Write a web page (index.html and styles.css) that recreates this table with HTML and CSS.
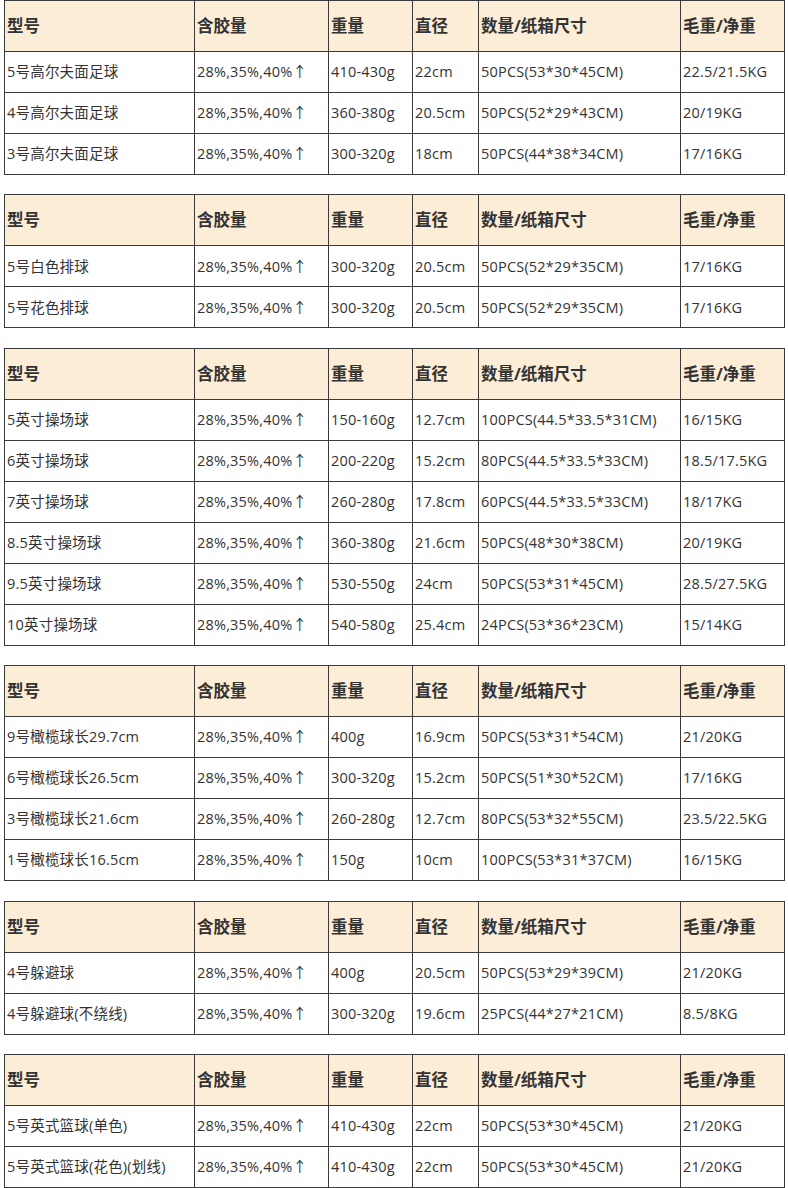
FILE: index.html
```html
<!DOCTYPE html>
<html lang="zh-CN">
<head>
<meta charset="utf-8">
<title>规格表</title>
<link rel="stylesheet" href="styles.css">
</head>
<body>
<div class="page">

<table class="spec">
<colgroup><col class="c1"><col class="c2"><col class="c3"><col class="c4"><col class="c5"><col class="c6"></colgroup>
<tr class="head"><th>型号</th><th>含胶量</th><th>重量</th><th>直径</th><th>数量/纸箱尺寸</th><th>毛重/净重</th></tr>
<tr><td>5号高尔夫面足球</td><td>28%,35%,40%↑</td><td>410-430g</td><td>22cm</td><td>50PCS(53*30*45CM)</td><td>22.5/21.5KG</td></tr>
<tr><td>4号高尔夫面足球</td><td>28%,35%,40%↑</td><td>360-380g</td><td>20.5cm</td><td>50PCS(52*29*43CM)</td><td>20/19KG</td></tr>
<tr><td>3号高尔夫面足球</td><td>28%,35%,40%↑</td><td>300-320g</td><td>18cm</td><td>50PCS(44*38*34CM)</td><td>17/16KG</td></tr>
</table>

<table class="spec">
<colgroup><col class="c1"><col class="c2"><col class="c3"><col class="c4"><col class="c5"><col class="c6"></colgroup>
<tr class="head"><th>型号</th><th>含胶量</th><th>重量</th><th>直径</th><th>数量/纸箱尺寸</th><th>毛重/净重</th></tr>
<tr><td>5号白色排球</td><td>28%,35%,40%↑</td><td>300-320g</td><td>20.5cm</td><td>50PCS(52*29*35CM)</td><td>17/16KG</td></tr>
<tr><td>5号花色排球</td><td>28%,35%,40%↑</td><td>300-320g</td><td>20.5cm</td><td>50PCS(52*29*35CM)</td><td>17/16KG</td></tr>
</table>

<table class="spec">
<colgroup><col class="c1"><col class="c2"><col class="c3"><col class="c4"><col class="c5"><col class="c6"></colgroup>
<tr class="head"><th>型号</th><th>含胶量</th><th>重量</th><th>直径</th><th>数量/纸箱尺寸</th><th>毛重/净重</th></tr>
<tr><td>5英寸操场球</td><td>28%,35%,40%↑</td><td>150-160g</td><td>12.7cm</td><td>100PCS(44.5*33.5*31CM)</td><td>16/15KG</td></tr>
<tr><td>6英寸操场球</td><td>28%,35%,40%↑</td><td>200-220g</td><td>15.2cm</td><td>80PCS(44.5*33.5*33CM)</td><td>18.5/17.5KG</td></tr>
<tr><td>7英寸操场球</td><td>28%,35%,40%↑</td><td>260-280g</td><td>17.8cm</td><td>60PCS(44.5*33.5*33CM)</td><td>18/17KG</td></tr>
<tr><td>8.5英寸操场球</td><td>28%,35%,40%↑</td><td>360-380g</td><td>21.6cm</td><td>50PCS(48*30*38CM)</td><td>20/19KG</td></tr>
<tr><td>9.5英寸操场球</td><td>28%,35%,40%↑</td><td>530-550g</td><td>24cm</td><td>50PCS(53*31*45CM)</td><td>28.5/27.5KG</td></tr>
<tr><td>10英寸操场球</td><td>28%,35%,40%↑</td><td>540-580g</td><td>25.4cm</td><td>24PCS(53*36*23CM)</td><td>15/14KG</td></tr>
</table>

<table class="spec">
<colgroup><col class="c1"><col class="c2"><col class="c3"><col class="c4"><col class="c5"><col class="c6"></colgroup>
<tr class="head"><th>型号</th><th>含胶量</th><th>重量</th><th>直径</th><th>数量/纸箱尺寸</th><th>毛重/净重</th></tr>
<tr><td>9号橄榄球长29.7cm</td><td>28%,35%,40%↑</td><td>400g</td><td>16.9cm</td><td>50PCS(53*31*54CM)</td><td>21/20KG</td></tr>
<tr><td>6号橄榄球长26.5cm</td><td>28%,35%,40%↑</td><td>300-320g</td><td>15.2cm</td><td>50PCS(51*30*52CM)</td><td>17/16KG</td></tr>
<tr><td>3号橄榄球长21.6cm</td><td>28%,35%,40%↑</td><td>260-280g</td><td>12.7cm</td><td>80PCS(53*32*55CM)</td><td>23.5/22.5KG</td></tr>
<tr><td>1号橄榄球长16.5cm</td><td>28%,35%,40%↑</td><td>150g</td><td>10cm</td><td>100PCS(53*31*37CM)</td><td>16/15KG</td></tr>
</table>

<table class="spec">
<colgroup><col class="c1"><col class="c2"><col class="c3"><col class="c4"><col class="c5"><col class="c6"></colgroup>
<tr class="head"><th>型号</th><th>含胶量</th><th>重量</th><th>直径</th><th>数量/纸箱尺寸</th><th>毛重/净重</th></tr>
<tr><td>4号躲避球</td><td>28%,35%,40%↑</td><td>400g</td><td>20.5cm</td><td>50PCS(53*29*39CM)</td><td>21/20KG</td></tr>
<tr><td>4号躲避球(不绕线)</td><td>28%,35%,40%↑</td><td>300-320g</td><td>19.6cm</td><td>25PCS(44*27*21CM)</td><td>8.5/8KG</td></tr>
</table>

<table class="spec">
<colgroup><col class="c1"><col class="c2"><col class="c3"><col class="c4"><col class="c5"><col class="c6"></colgroup>
<tr class="head"><th>型号</th><th>含胶量</th><th>重量</th><th>直径</th><th>数量/纸箱尺寸</th><th>毛重/净重</th></tr>
<tr><td>5号英式篮球(单色)</td><td>28%,35%,40%↑</td><td>410-430g</td><td>22cm</td><td>50PCS(53*30*45CM)</td><td>21/20KG</td></tr>
<tr><td>5号英式篮球(花色)(划线)</td><td>28%,35%,40%↑</td><td>410-430g</td><td>22cm</td><td>50PCS(53*30*45CM)</td><td>21/20KG</td></tr>
</table>

</div>
</body>
</html>
```
FILE: styles.css
```css
html, body {
  margin: 0;
  padding: 0;
  background: #ffffff;
}

.page {
  display: flex;
  flex-direction: column;
  gap: 19.4px;
  padding: 0 0 0 4px;
  font-family: "Open Sans", "Noto Sans CJK SC", sans-serif;
  color: #333333;
}

.spec {
  border-collapse: collapse;
  table-layout: fixed;
  width: 780px;
}

.c1 { width: 190px; }
.c2 { width: 134px; }
.c3 { width: 84px; }
.c4 { width: 66px; }
.c5 { width: 202px; }
.c6 { width: 104px; }

.spec th,
.spec td {
  border: 1px solid #3a3a3a;
  padding: 0 0 0 2px;
  text-align: left;
  vertical-align: middle;
  white-space: nowrap;
  overflow: hidden;
  line-height: 1.2;
}

.spec th {
  height: 50px;
  background: #fcedd7;
  font-size: 16.5px;
  font-weight: 700;
  color: #333333;
}

.spec td {
  height: 40px;
  font-size: 14.5px;
  font-weight: 400;
  letter-spacing: 0.2px;
}
```
